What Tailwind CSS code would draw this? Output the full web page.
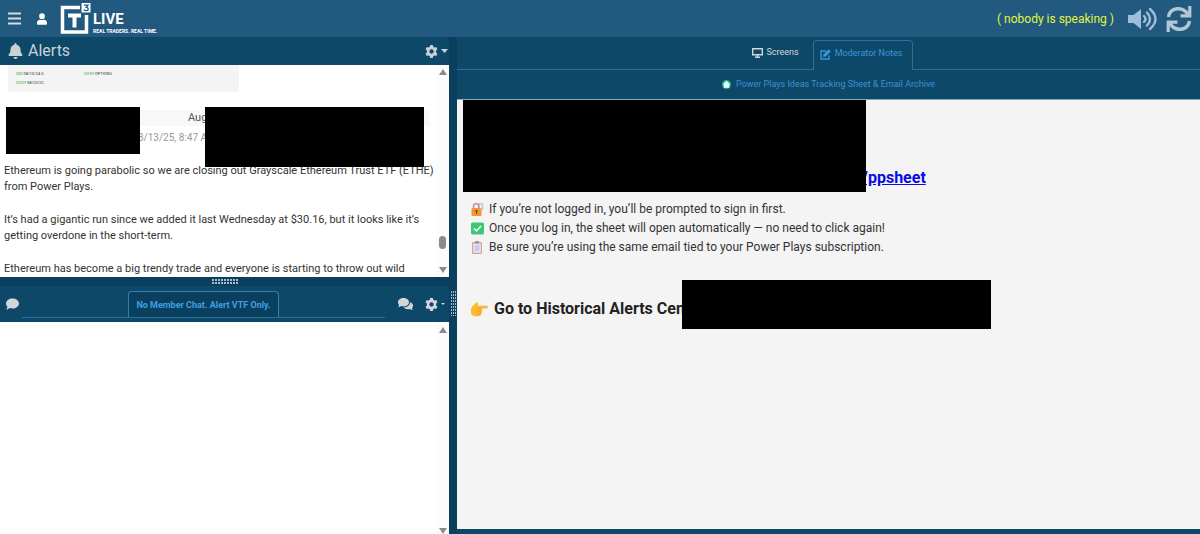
<!DOCTYPE html>
<html lang="en">
<head>
    <meta charset="UTF-8">
    <meta name="viewport" content="width=device-width, initial-scale=1.0">
    <title>T3 Live - Trading Room</title>
    <script src="https://cdn.jsdelivr.net/npm/@tailwindcss/browser@4"></script>
</head>
<body class="flex h-screen flex-col overflow-hidden bg-[#0d4869] font-[Roboto,sans-serif]">
    <!-- Top bar -->
    <header class="flex h-[37px] shrink-0 items-center bg-[#22597f] pr-2 pl-2">
        <button type="button" aria-label="Menu" class="text-[#d5dbe0]">
            <svg class="h-[13px] w-[13px]" viewBox="0 0 13 13" fill="currentColor"><path d="M0 .5h13v2H0zM0 5.500h13v2H0zM0 10.500h13v2H0z"/></svg>
        </button>
        <button type="button" aria-label="Profile" class="ml-4 text-white">
            <svg class="h-3 w-[10px]" viewBox="0 0 448 512" fill="currentColor"><path d="M224 256a128 128 0 1 0 0-256 128 128 0 0 0 0 256zm90 32h-17a174 174 0 0 1-146 0h-17C60 288 0 348 0 422v42c0 27 21 48 48 48h352c27 0 48-21 48-48v-42c0-74-60-134-134-134z"/></svg>
        </button>
        <!-- Logo -->
        <a href="#" class="ml-[13px] flex items-end gap-px text-white">
            <svg class="h-8 w-[32px]" viewBox="0 0 32 32" aria-hidden="true">
                <path d="M20 4.500H2.500V29H26.500V12" fill="none" stroke="#fff" stroke-width="3.500"/>
                <path d="M8 10.500h13v4h-4.500v10h-4v-10H8z" fill="#fff"/>
                <path d="M21.500 0h9v9.500h-9z" fill="#fff"/>
                <path d="M24 2.200h4L26.200 4.400c3 .2 2.500 3.400-.1 3.200-1 0-1.700-.3-2.300-.8" fill="none" stroke="#22597f" stroke-width="1.300"/>
            </svg>
            <span class="flex flex-col">
                <span class="text-[15px] leading-4 font-bold">LIVE</span>
                <span class="text-[5px] leading-2 font-bold">REAL TRADERS. REAL TIME.</span>
            </span>
        </a>
        <p class="mr-[14px] ml-auto text-[12px] text-[#e3f53c]">( nobody is speaking )</p>
        <button type="button" aria-label="Volume" class="mr-2 text-[#9fbcd8]">
            <svg class="h-6 w-[30px]" viewBox="0 0 30 24">
                <path d="M0 8h5.500L13 2v20l-7.500-6H0z" fill="currentColor"/>
                <path d="M16 9q3 3 0 6M19 5.500q6 6.500 0 13M22 2q11 10 0 20" fill="none" stroke="currentColor" stroke-width="2.400" stroke-linecap="round"/>
            </svg>
        </button>
        <button type="button" aria-label="Refresh" class="text-[#b3c6d6]">
            <svg class="h-[26px] w-[26px]" viewBox="0 0 26 26" fill="none" stroke="currentColor" stroke-width="3.500">
                <path d="M2.500 11C4 1 17 0 22 8.500M23.500 15C22 25 9 26 4 17.500"/>
                <path d="M23.800 0v9.800H14.500M2.200 26v-9.800h9.300" stroke-width="3.200"/>
            </svg>
        </button>
    </header>

    <div class="grid min-h-0 flex-1 grid-cols-[449fr_8px_743fr]">
        <!-- Left column -->
        <div class="grid min-h-0 min-w-0 grid-rows-[240fr_9px_248fr]">
            <section class="flex min-h-0 flex-col">
                <div class="flex h-7 shrink-0 items-center pr-px pl-2 text-[#c9d0d6]">
                    <svg class="h-4 w-[15px]" viewBox="0 0 448 512" fill="currentColor"><path d="M224 512c35 0 64-29 64-64H160c0 35 29 64 64 64zm215-150c-19-21-55-52-55-154 0-78-54-140-128-155V32a32 32 0 1 0-64 0v21C118 68 64 130 64 208c0 102-36 133-55 154a31 31 0 0 0-9 22c0 16 13 32 32 32h384c19 0 32-16 32-32a31 31 0 0 0-9-22z"/></svg>
                    <h1 class="ml-[5px] text-[16px]">Alerts</h1>
                    <button type="button" aria-label="Alert settings" class="ml-auto flex items-center gap-[3px]">
                        <svg class="h-[13px] w-[13px]" viewBox="0 0 24 24" fill="currentColor"><path fill-rule="evenodd" d="M9.500 0h5l.7 3.400 2.100 1.200 3.300-1.100 2.500 4.300-2.600 2.300v3.800l2.600 2.300-2.500 4.300-3.300-1.100-2.100 1.200-.7 3.400h-5l-.7-3.400-2.100-1.200-3.300 1.100-2.500-4.300 2.600-2.300v-3.800L.9 7.800l2.500-4.300 3.300 1.100 2.100-1.200zM12 8a4 4 0 1 0 0 8 4 4 0 0 0 0-8z"/></svg>
                        <svg class="h-1 w-[7px]" viewBox="0 0 7 4" fill="currentColor"><path d="M0 0h7L3.500 4z"/></svg>
                    </button>
                </div>
                <div class="flex min-h-0 flex-1 bg-white">
                    <div class="relative min-w-0 flex-1 overflow-hidden">
                        <!-- Tail of the ticker picture from the previous alert -->
                        <div class="ml-2 grid h-[27px] w-[231px] grid-cols-[68px_1fr] content-start gap-y-1 bg-[#f4f4f4] pt-[6px] pl-2 text-[4px] leading-[5px] text-[#333]">
                            <span><span class="text-[#2fa82f]">QID</span> 08/15/24 S</span>
                            <span><span class="text-[#2fa82f]">UVXY</span> OPTIONS</span>
                            <span><span class="text-[#2fa82f]">UVXY</span> 08/23/2C</span>
                        </div>
                        <div class="mt-[18px] mr-[6px] ml-2 h-4 bg-[#f8f8f8] pl-[180px] text-[11px] leading-4 text-[#555]">Aug</div>
                        <p class="mt-1 pl-[138px] text-[10px] leading-4 text-[#999]">8/13/25, 8:47 AM</p>
                        <div class="mt-[17px] flex flex-col gap-[17px] pl-1 text-[11px] leading-4 text-[#333]">
                            <p>Ethereum is going parabolic so we are closing out Grayscale Ethereum Trust ETF (ETHE)<br>from Power Plays.</p>
                            <p>It’s had a gigantic run since we added it last Wednesday at $30.16, but it looks like it’s<br>getting overdone in the short-term.</p>
                            <p>Ethereum has become a big trendy trade and everyone is starting to throw out wild</p>
                        </div>
                        <div class="absolute top-[42px] left-[6px] h-[47px] w-[134px] bg-black"></div>
                        <div class="absolute top-[42px] left-[205px] h-[60px] w-[219px] bg-black"></div>
                    </div>
                    <!-- Scrollbar -->
                    <div class="flex w-[13px] shrink-0 flex-col items-center bg-[#fcfcfc] py-1 text-[#8b8b8b]">
                        <svg class="h-[6px] w-2" viewBox="0 0 8 6" fill="currentColor"><path d="M4 0l4 6H0z"/></svg>
                        <div class="mt-auto mb-[18px] h-[13px] w-[7px] rounded-full bg-[#8b8b8b]"></div>
                        <svg class="h-[6px] w-2" viewBox="0 0 8 6" fill="currentColor"><path d="M0 0h8L4 6z"/></svg>
                    </div>
                </div>
            </section>

            <!-- Horizontal splitter -->
            <div class="flex items-center justify-center bg-[#0b3f5e]">
                <svg class="h-[5px] w-[26px]" viewBox="0 0 26 5" stroke="#a9bccb" stroke-width="2"><path d="M0 1h26M0 4h26" stroke-dasharray="2 1"/></svg>
            </div>

            <section class="flex min-h-0 flex-col">
                <div class="flex h-9 shrink-0 items-center text-[#d3d5da]">
                    <svg class="ml-[6px] h-3 w-[13px]" viewBox="0 0 13 12" fill="currentColor"><path d="M6.500.5C10 .5 13 2.600 13 5.500s-3 5-6.500 5c-1 0-2-.2-2.800-.5C2.800 10.800 1.500 11.500.2 11.500c.7-.8 1.100-1.700 1.200-2.700C.5 7.900 0 6.800 0 5.500 0 2.600 3 .5 6.500.5z"/></svg>
                    <div class="ml-[3px] flex h-8 flex-1 items-end justify-center self-start border-b border-[#27719f]">
                        <button type="button" class="h-[26px] rounded-t border border-b-0 border-[#2e7fb3] bg-[#0b3f5e] px-[7px] pt-[2px] text-[9px] font-bold text-[#3c9fe4]">No Member Chat. Alert VTF Only.</button>
                    </div>
                    <svg class="ml-[13px] h-3 w-[15px]" viewBox="0 0 15 12" fill="currentColor"><path d="M5.500 0C8.500 0 11 1.800 11 4.200S8.500 8.400 5.500 8.400c-.8 0-1.500-.1-2.200-.3C2.500 8.700 1.300 9.200 0 9.200c.6-.6 1-1.400 1.100-2C.4 6.400 0 5.300 0 4.200 0 1.800 2.500 0 5.500 0z"/><path d="M12 4.200c1.700.6 3 1.900 3 3.500 0 1-.4 1.900-1.100 2.500.1.700.5 1.300 1.100 1.800-1.200 0-2.300-.4-3.100-1-2.500.6-5.200 0-6.300-1.700C9.300 9.200 12 7.300 12 4.200z"/></svg>
                    <button type="button" aria-label="Chat settings" class="mr-1 ml-3 flex items-center gap-[3px]">
                        <svg class="h-[13px] w-[13px]" viewBox="0 0 24 24" fill="currentColor"><path fill-rule="evenodd" d="M9.500 0h5l.7 3.400 2.100 1.200 3.300-1.100 2.500 4.300-2.600 2.300v3.800l2.600 2.300-2.500 4.300-3.300-1.100-2.100 1.200-.7 3.400h-5l-.7-3.400-2.100-1.200-3.300 1.100-2.500-4.300 2.600-2.300v-3.800L.9 7.800l2.500-4.300 3.300 1.100 2.100-1.200zM12 8a4 4 0 1 0 0 8 4 4 0 0 0 0-8z"/></svg>
                        <svg class="h-[2px] w-1" viewBox="0 0 4 2" fill="currentColor"><path d="M0 0h4L2 2z"/></svg>
                    </button>
                </div>
                <div class="flex min-h-0 flex-1 justify-end bg-white">
                    <div class="flex w-[13px] flex-col items-center justify-between bg-[#fcfcfc] pt-[5px] text-[#8b8b8b]">
                        <svg class="h-[6px] w-2" viewBox="0 0 8 6" fill="currentColor"><path d="M4 0l4 6H0z"/></svg>
                        <svg class="h-[6px] w-2" viewBox="0 0 8 6" fill="currentColor"><path d="M0 0h8L4 6z"/></svg>
                    </div>
                </div>
            </section>
        </div>

        <!-- Vertical splitter -->
        <div class="flex items-center justify-center bg-[#0b3f5e] pt-[36px]">
            <svg class="h-[25px] w-[5px]" viewBox="0 0 5 25" stroke="#a9bccb" stroke-width="1"><path d="M.5 0v25M2.500 0v25M4.500 0v25" stroke-dasharray="2 1"/></svg>
        </div>

        <!-- Right column -->
        <main class="flex min-h-0 min-w-0 flex-col pb-[5px]">
            <nav class="flex h-[33px] shrink-0 items-end justify-center border-b border-[#27719f] pr-[6px] text-[9px]">
                <a href="#" class="flex h-[30px] items-center gap-1 px-[14px] pb-[3px] text-[#d3d5da]">
                    <svg class="h-[10px] w-[11px]" viewBox="0 0 11 10" fill="none" stroke="currentColor" stroke-width="1.400"><path d="M.7.7h9.600v6.100H.7zM5.500 7v2M3 9.300h5"/></svg>
                    Screens
                </a>
                <a href="#" class="-mb-px flex h-[30px] items-center gap-1 rounded-t border border-b-0 border-[#27719f] bg-[#0d4869] pr-[10px] pb-[3px] pl-[6px] text-[#3b97d8]">
                    <svg class="h-[11px] w-[11px]" viewBox="0 0 11 11" fill="none" stroke="currentColor" stroke-width="1.400"><path d="M6 2H1v8h8V6.500"/><path d="M3.500 5.500L8.500.3l2.200 2.200-5 5-2.600.4z" fill="currentColor" stroke="none"/></svg>
                    Moderator Notes
                </a>
            </nav>
            <div class="flex h-[29px] shrink-0 items-center justify-center gap-[5px] text-[9px] text-[#3a92d2]">
                <svg class="h-[9px] w-[9px]" viewBox="0 0 9 9"><circle cx="4.500" cy="4.500" r="4.500" fill="#1fb58a"/><path d="M4.500.8L8.300 4.500H7.200v3.200H1.800V4.500H.7z" fill="#f4fffb"/></svg>
                <a href="#">Power Plays Ideas Tracking Sheet &amp; Email Archive</a>
            </div>
            <article class="relative min-h-0 flex-1 overflow-hidden border-t border-[#8ba6b8] bg-[#f4f4f4] pl-[14px] text-[#333]">
                <p class="mt-[68px] pl-[391px] text-[16px] leading-5 font-bold"><a href="#" class="text-[#0b0be6] underline">/ppsheet</a></p>
                <ul class="mt-3 text-[12px] leading-[19px]">
                    <li class="flex items-center gap-[5px]">
                        <svg class="h-[13px] w-[13px]" viewBox="0 0 13 13"><path d="M7.500 5V2.500a2 2 0 0 1 4 0V7" fill="none" stroke="#c3bedd" stroke-width="1.500"/><path d="M2.500 6V3.500a2.700 2.700 0 0 1 5.400 0V6" fill="none" stroke="#b99a8e" stroke-width="1.500"/><rect x=".5" y="5" width="10" height="8" rx="1" fill="#f0953a"/><circle cx="5.500" cy="8" r="1.100" fill="#5d3520"/><path d="M5 8h1v3H5z" fill="#5d3520"/></svg>
                        If you’re not logged in, you’ll be prompted to sign in first.
                    </li>
                    <li class="flex items-center gap-[5px]">
                        <svg class="h-[13px] w-[13px]" viewBox="0 0 13 13"><rect width="13" height="12" y=".5" rx="1.500" fill="#3fc779"/><path d="M3 6.500L5.500 9 10 4" fill="none" stroke="#fff" stroke-width="1.500"/></svg>
                        Once you log in, the sheet will open automatically — no need to click again!
                    </li>
                    <li class="flex items-center gap-[5px]">
                        <svg class="h-[13px] w-[13px]" viewBox="0 0 13 13"><rect x="1" y="1" width="10" height="12" rx="1" fill="#d3a69c"/><path d="M2.200 2.500h7.600v9.300H2.200z" fill="#e9e4f5"/><path d="M4 0h4v2.500H4z" fill="#9b96b8"/><path d="M3.500 5h5M3.500 7h5M3.500 9h5" stroke="#aaa3cc" stroke-width=".8"/></svg>
                        Be sure you’re using the same email tied to your Power Plays subscription.
                    </li>
                </ul>
                <h2 class="mt-[42px] flex items-center gap-[6px] text-[16px] leading-5 font-bold text-[#222]">
                    <svg class="h-[15px] w-[17px]" viewBox="0 0 17 15"><path d="M0 6.500C1.500 4.500 4 1 6 .5c1.500 0 1.500 1.500.8 2.500l-.5.7H15.500c2 0 2 2.800 0 2.800H10c1.800.3 1.700 2.500.2 2.700 1.200.5 1 2.300-.4 2.500.8.800.2 2.300-1.200 2.300C5 14.500 2 14.500 0 12z" fill="#fcb932"/><path d="M6 6.500h4M6.500 9.200h3.700M6.500 11.700h3.300" stroke="#e28f20" stroke-width=".7"/></svg>
                    Go to Historical Alerts Center
                </h2>
                <div class="absolute top-0 left-[6px] h-[92px] w-[403px] bg-black"></div>
                <div class="absolute top-[180px] left-[225px] h-[49px] w-[309px] bg-black"></div>
            </article>
        </main>
    </div>
</body>
</html>
